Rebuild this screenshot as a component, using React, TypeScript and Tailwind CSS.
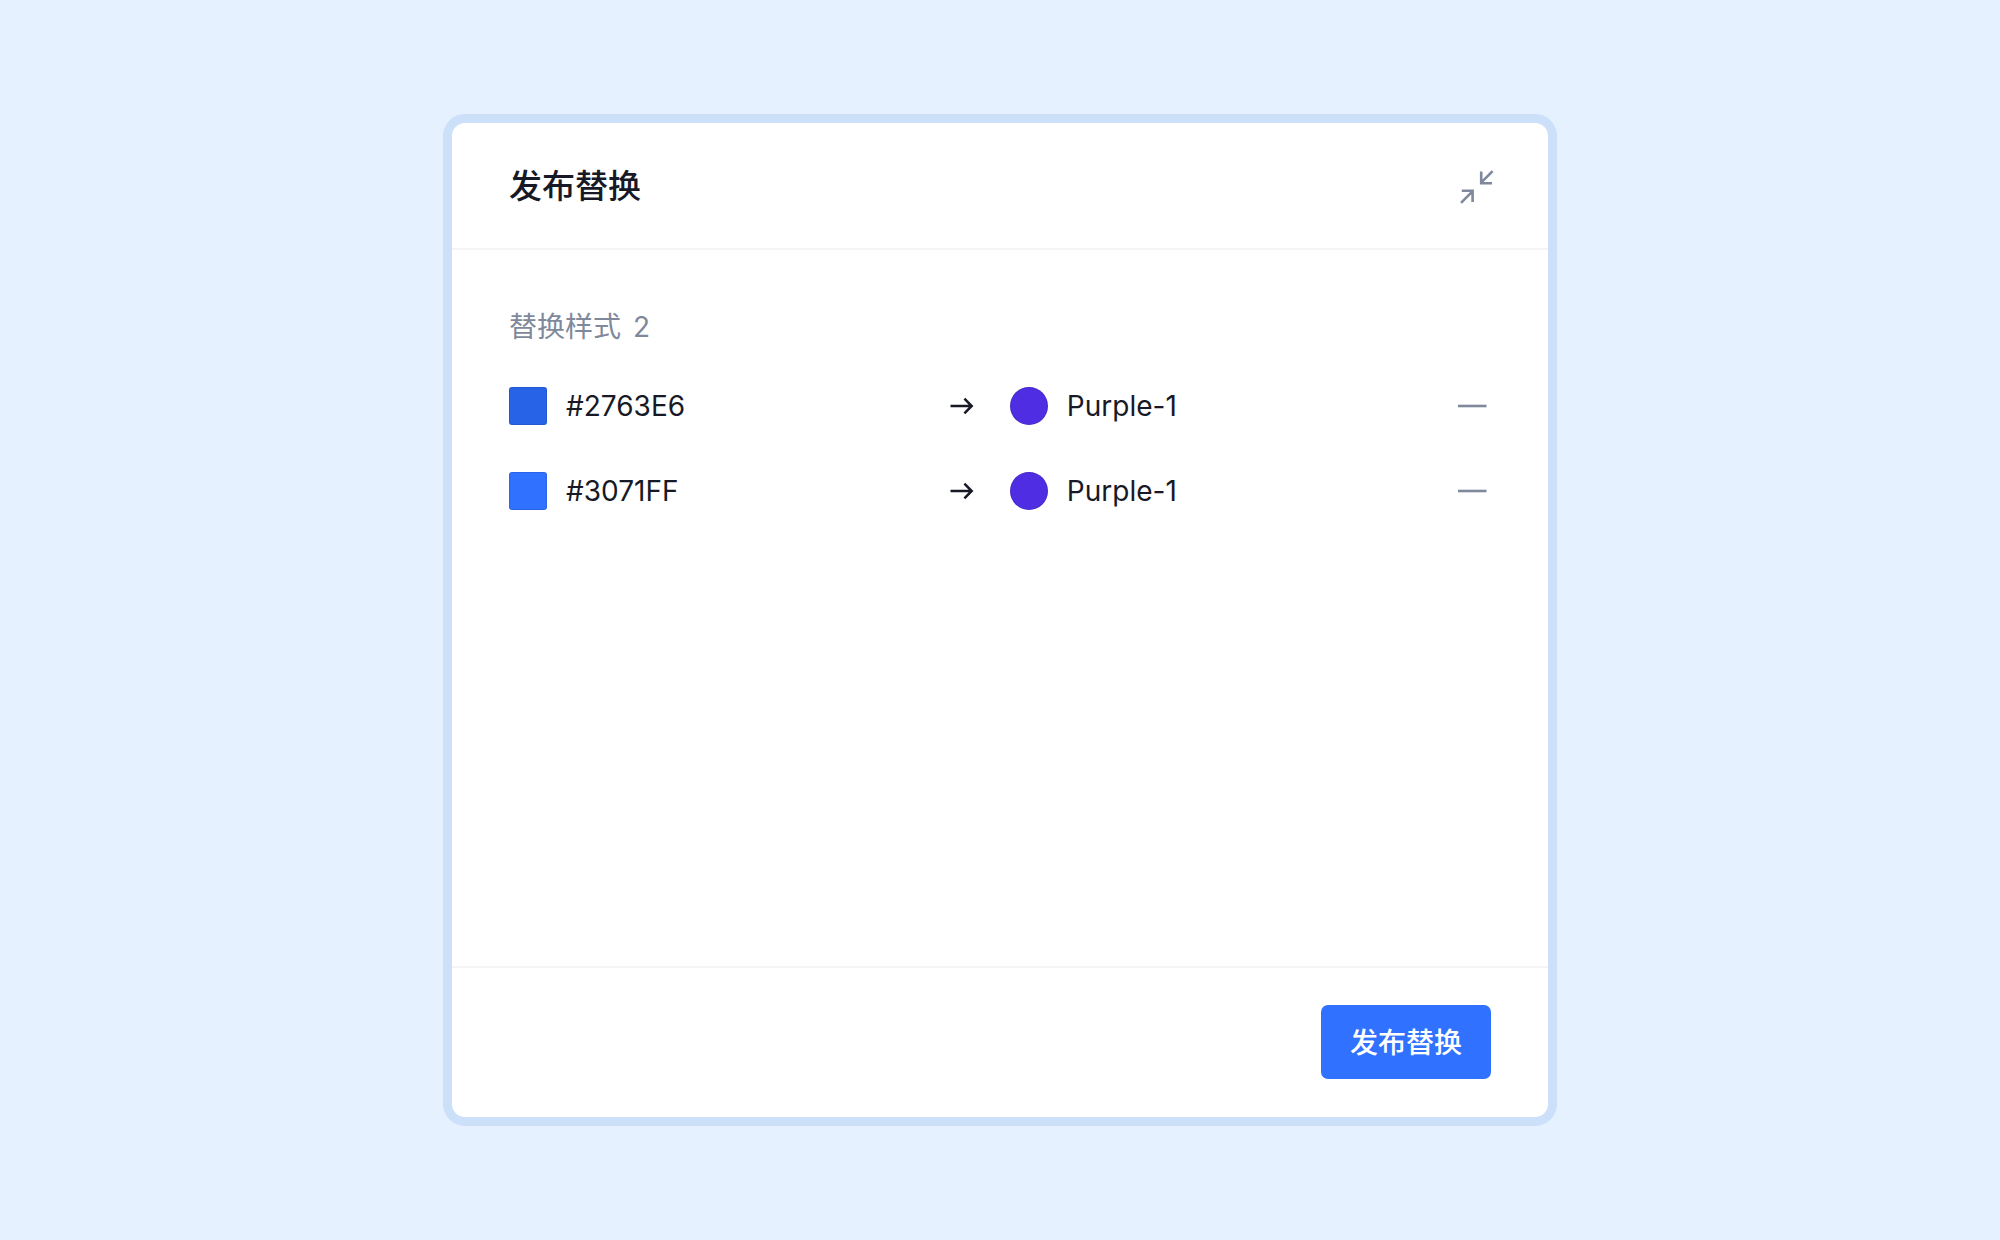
import { useState } from "react";

interface Replacement {
  id: number;
  from: string;
  swatch: string;
  to: string;
  dot: string;
}

const REPLACEMENTS: Replacement[] = [
  { id: 1, from: "#2763E6", swatch: "bg-[#2763e6]", to: "Purple-1", dot: "bg-[#4f2de2]" },
  { id: 2, from: "#3071FF", swatch: "bg-[#3071ff]", to: "Purple-1", dot: "bg-[#4f2de2]" },
];

function CollapseIcon() {
  return (
    <svg viewBox="0 0 40 40" className="size-10" fill="none" stroke="currentColor" strokeWidth="2.6" aria-hidden="true">
      <path d="M35.6 4.2 23.9 15.9M24.2 4.4V16.2H35" />
      <path d="M4 35.8 15.7 24.1M4.8 23.8H15.6V35" />
    </svg>
  );
}

function ArrowIcon() {
  return (
    <svg viewBox="0 0 24 20" className="h-5 w-6 shrink-0" fill="none" stroke="currentColor" strokeWidth="2.5" aria-hidden="true">
      <path d="M0.5 10H22M14.4 2.7 21.7 10l-7.3 7.3" />
    </svg>
  );
}

function MinusIcon() {
  return (
    <svg viewBox="0 0 32 32" className="size-8" fill="none" stroke="currentColor" strokeWidth="2.6" aria-hidden="true">
      <path d="M2 16H30.5" />
    </svg>
  );
}

export default function App() {
  const [items, setItems] = useState(REPLACEMENTS);
  const [collapsed, setCollapsed] = useState(false);

  return (
    <div className="flex min-h-screen items-center justify-center bg-[#e5f1ff] font-['Inter','Noto_Sans_CJK_SC',sans-serif] text-[#171a26]">
      <section className="w-full max-w-[1114px] rounded-[22px] border-[9px] border-[#cce0fa] bg-white">
        <header className="flex items-center justify-between border-b-2 border-[#f5f5f6] pt-[43px] pr-[51px] pb-[41px] pl-[57px]">
          <h1 className="text-[33px] leading-[41px] font-medium">发布替换</h1>
          <button type="button" aria-label="收起" className="text-[#7f899b]" onClick={() => setCollapsed(!collapsed)}>
            <CollapseIcon />
          </button>
        </header>

        {!collapsed && (
          <div className="min-h-[716px] px-[57px] pt-[57px] pb-10">
            <h2 className="flex gap-3 text-[28px] leading-10 text-[#7f899b]">
              替换样式 <span>{items.length}</span>
            </h2>

            <ul className="mt-10 space-y-[47px]">
              {items.map((item) => (
                <li key={item.id} className="flex h-[38px] items-center text-[28px] leading-10">
                  <div className="flex flex-1 items-center gap-[19px]">
                    <span className={`size-[38px] rounded-[3px] border border-black/10 ${item.swatch}`} />
                    {item.from}
                  </div>
                  <ArrowIcon />
                  <div className="ml-9 flex w-[49%] items-center justify-between">
                    <div className="flex items-center gap-[19px]">
                      <span className={`size-[38px] rounded-full border border-black/10 ${item.dot}`} />
                      {item.to}
                    </div>
                    <button
                      type="button"
                      aria-label={`移除 ${item.from}`}
                      className="mr-[3px] text-[#7f899b]"
                      onClick={() => setItems(items.filter((i) => i.id !== item.id))}
                    >
                      <MinusIcon />
                    </button>
                  </div>
                </li>
              ))}
            </ul>
          </div>
        )}

        <footer className="flex justify-end border-t-2 border-[#f5f5f6] px-[57px] pt-[37px] pb-[38px]">
          <button type="button" className="rounded-[7px] bg-[#3071ff] px-[29px] pt-[18px] pb-4 text-[28px] leading-10 font-medium text-white">
            发布替换
          </button>
        </footer>
      </section>
    </div>
  );
}
